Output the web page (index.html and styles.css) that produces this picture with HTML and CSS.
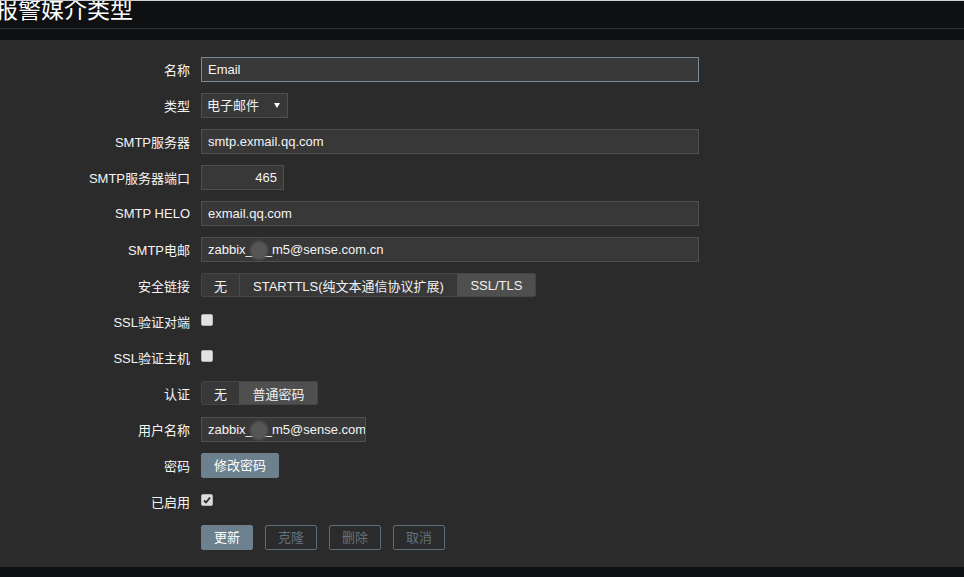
FILE: index.html
```html
<!DOCTYPE html>
<html lang="zh-CN">
<head>
<meta charset="utf-8">
<title>报警媒介类型</title>
<link rel="stylesheet" href="styles.css">
</head>
<body>
<header class="header">
  <h1 class="title">报警媒介类型</h1>
</header>
<main class="panel">
  <form class="form">
    <label class="label">名称</label>
    <div class="field w-wide focus">Email</div>

    <label class="label">类型</label>
    <div class="field select"><span>电子邮件</span><span class="arrow"></span></div>

    <label class="label">SMTP服务器</label>
    <div class="field w-wide">smtp.exmail.qq.com</div>

    <label class="label">SMTP服务器端口</label>
    <div class="field w-port">465</div>

    <label class="label">SMTP HELO</label>
    <div class="field w-wide">exmail.qq.com</div>

    <label class="label">SMTP电邮</label>
    <div class="field w-wide">zabbix_<span class="blur"></span>_m5@sense.com.cn</div>

    <label class="label">安全链接</label>
    <div class="seg">
      <span class="seg-item">无</span>
      <span class="seg-item wide">STARTTLS(纯文本通信协议扩展)</span>
      <span class="seg-item on">SSL/TLS</span>
    </div>

    <label class="label">SSL验证对端</label>
    <span class="check"></span>

    <label class="label">SSL验证主机</label>
    <span class="check"></span>

    <label class="label">认证</label>
    <div class="seg">
      <span class="seg-item">无</span>
      <span class="seg-item on">普通密码</span>
    </div>

    <label class="label">用户名称</label>
    <div class="field w-user">zabbix_<span class="blur"></span>_m5@sense.com.cn</div>

    <label class="label">密码</label>
    <div><button type="button" class="btn">修改密码</button></div>

    <label class="label">已启用</label>
    <span class="check checked">
      <svg viewBox="0 0 10 10" width="10" height="10"><path d="M2 5.5 L4 7.5 L8 2.5" fill="none" stroke="#2a2a2a" stroke-width="1.8"/></svg>
    </span>

    <span></span>
    <div class="actions">
      <button type="button" class="btn">更新</button>
      <button type="button" class="btn alt">克隆</button>
      <button type="button" class="btn alt">删除</button>
      <button type="button" class="btn alt">取消</button>
    </div>
  </form>
</main>
</body>
</html>
```

FILE: styles.css
```css
html, body {
  margin: 0;
  padding: 0;
}
body {
  background: #0e1012;
  font-family: "Liberation Sans", "Noto Sans CJK SC", sans-serif;
  font-size: 13px;
  color: #f2f2f2;
  height: 577px;
  overflow: hidden;
}
.header {
  border-top: 1px solid #cfcfcf;
  border-bottom: 1px solid #333537;
  height: 27px;
  overflow: hidden;
  margin-bottom: 11px;
}
.title {
  margin: -4px 0 0 -5px;
  font-family: "Noto Sans CJK SC", sans-serif;
  font-weight: normal;
  font-size: 23px;
  line-height: 23px;
  color: #ffffff;
  white-space: nowrap;
}
.panel {
  background: #2b2b2b;
  padding: 17px 0;
}
.form {
  display: grid;
  grid-template-columns: 190px 1fr;
  grid-auto-rows: 25px;
  column-gap: 11px;
  row-gap: 11px;
}
.label {
  text-align: right;
  align-self: center;
  white-space: nowrap;
  color: #f4f4f4;
  margin-top: -1px;
}
.field {
  box-sizing: border-box;
  height: 25px;
  border: 1px solid #4f4f4f;
  background: #383838;
  color: #f4f4f4;
  padding: 0 6px;
  line-height: 23px;
  white-space: nowrap;
  overflow: hidden;
  justify-self: start;
}
.w-wide { width: 498px; }
.w-port { width: 83px; text-align: right; }
.w-user { width: 165px; }
.focus { border-color: #768d99; }
.select {
  width: 87px;
  padding: 0 5px;
  display: flex;
  align-items: center;
  justify-content: space-between;
}
.arrow {
  width: 0;
  height: 0;
  border-left: 3px solid transparent;
  border-right: 3px solid transparent;
  border-top: 5px solid #ffffff;
  margin-right: 2px;
}
.blur {
  display: inline-block;
  width: 18px;
  height: 19px;
  margin: 0 -3px;
  vertical-align: -6px;
  border-radius: 50%;
  background: #565656;
  filter: blur(1px);
}
.seg {
  display: flex;
  justify-self: start;
  height: 24px;
  box-sizing: border-box;
  border: 1px solid #454545;
  border-radius: 2px;
  overflow: hidden;
}
.seg-item {
  display: flex;
  align-items: center;
  padding: 0 12.5px;
  background: #383838;
  border-left: 1px solid #4a4a4a;
  white-space: nowrap;
}
.seg-item:first-child { border-left: none; padding: 0 12px; }
.seg-item.wide { padding: 0 13px; }
.seg-item.on { background: #4f4f4f; border-left-color: #4f4f4f; padding: 0 12.5px; }
.check {
  box-sizing: border-box;
  width: 12px;
  height: 12px;
  align-self: start;
  margin-top: 5px;
  background: #e2e2e2;
  border: 1px solid #b5b5b5;
  border-radius: 2px;
  display: flex;
  align-items: center;
  justify-content: center;
}
.check.checked { background: #dcdcdc; }
.btn {
  box-sizing: border-box;
  height: 25px;
  padding: 0 12px;
  border: 1px solid #6c818d;
  border-radius: 2px;
  background: #6c818d;
  color: #ffffff;
  font-family: "Liberation Sans", "Noto Sans CJK SC", sans-serif;
  font-size: 13px;
  line-height: 23px;
  cursor: pointer;
}
.btn.alt {
  background: transparent;
  color: #60737f;
  border-color: #5b6e79;
}
.actions {
  display: flex;
  gap: 12px;
}
```
